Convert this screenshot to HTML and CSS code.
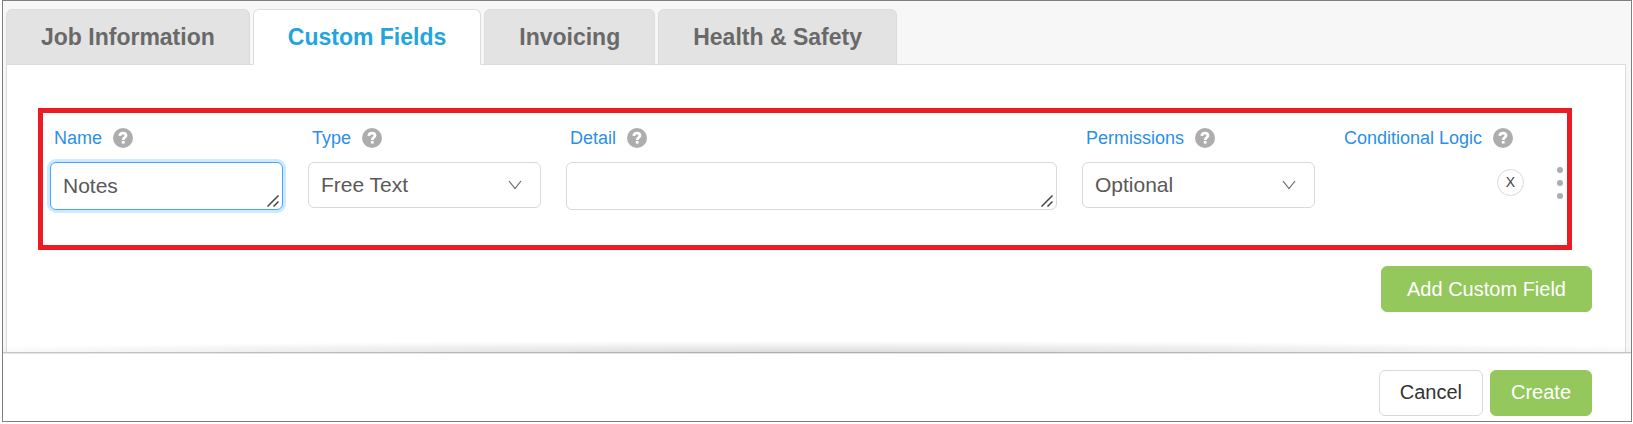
FILE: index.html
```
<!DOCTYPE html>
<html lang="en">
<head>
    <meta charset="UTF-8">
    <meta name="viewport" content="width=device-width, initial-scale=1.0">
    <title>Custom Fields</title>
    <link rel="stylesheet" href="styles.css">
</head>
<body>
    <svg class="sprite" aria-hidden="true">
        <symbol id="icon-help" viewBox="0 0 20 20">
            <circle cx="10" cy="10" r="10" fill="#adadad"/>
            <path d="M6.800 7.800C7 5.900 8.300 5.200 10 5.200C11.900 5.200 13 6.200 13 7.600C13 9.500 10.200 9.600 10.200 11.900" fill="none" stroke="#fff" stroke-width="2.800"/>
            <rect x="8.800" y="13" width="2.800" height="2.600" fill="#fff"/>
        </symbol>
        <symbol id="icon-arrow" viewBox="0 0 14 10">
            <path d="M1 1L7 8.500L13 1" fill="none" stroke="#666" stroke-width="1.200"/>
        </symbol>
        <symbol id="icon-grip" viewBox="0 0 12 12">
            <path d="M0.500 11.500L11.500 0.500M6.500 11.500L11.500 6.500" fill="none" stroke="#444" stroke-width="1.500"/>
        </symbol>
    </svg>

    <div class="window">
        <div class="tabs" role="tablist">
            <button class="tab" role="tab">Job Information</button>
            <button class="tab active" role="tab" aria-selected="true">Custom Fields</button>
            <button class="tab" role="tab">Invoicing</button>
            <button class="tab" role="tab">Health &amp; Safety</button>
        </div>

        <main class="panel">
            <div class="field-row">
                <div class="field">
                    <div class="field-label">
                        <label for="name">Name</label>
                        <svg class="help"><use href="#icon-help"/></svg>
                    </div>
                    <div class="control">
                        <textarea id="name" class="focused" rows="1">Notes</textarea>
                        <svg class="grip"><use href="#icon-grip"/></svg>
                    </div>
                </div>
                <div class="field">
                    <div class="field-label">
                        <label for="type">Type</label>
                        <svg class="help"><use href="#icon-help"/></svg>
                    </div>
                    <div class="control">
                        <select id="type">
                            <option>Free Text</option>
                        </select>
                        <svg class="arrow"><use href="#icon-arrow"/></svg>
                    </div>
                </div>
                <div class="field wide">
                    <div class="field-label">
                        <label for="detail">Detail</label>
                        <svg class="help"><use href="#icon-help"/></svg>
                    </div>
                    <div class="control">
                        <textarea id="detail" rows="1"></textarea>
                        <svg class="grip"><use href="#icon-grip"/></svg>
                    </div>
                </div>
                <div class="field">
                    <div class="field-label">
                        <label for="permissions">Permissions</label>
                        <svg class="help"><use href="#icon-help"/></svg>
                    </div>
                    <div class="control">
                        <select id="permissions">
                            <option>Optional</option>
                        </select>
                        <svg class="arrow"><use href="#icon-arrow"/></svg>
                    </div>
                </div>
                <div class="field">
                    <div class="field-label">
                        <span>Conditional Logic</span>
                        <svg class="help"><use href="#icon-help"/></svg>
                    </div>
                    <div class="row-actions">
                        <button class="remove" aria-label="Remove field">X</button>
                        <div class="drag">
                            <span></span>
                            <span></span>
                            <span></span>
                        </div>
                    </div>
                </div>
            </div>

            <div class="add-row">
                <button class="btn btn-green btn-wide">Add Custom Field</button>
            </div>
        </main>

        <footer class="footer">
            <button class="btn btn-plain">Cancel</button>
            <button class="btn btn-green">Create</button>
        </footer>
    </div>
</body>
</html>
```
FILE: styles.css
```
* {
    box-sizing: border-box;
}

body {
    margin: 0;
    padding: 0 1px 2px 2px;
    font-family: "Liberation Sans", Arial, sans-serif;
    background-color: #fff;
}

button, select, textarea {
    font-family: inherit;
    margin: 0;
}

button {
    cursor: pointer;
}

.sprite {
    display: none;
}

.window {
    border: 1px solid #7f7f7f;
    background-color: #f7f7f7;
}

.tabs {
    display: flex;
    gap: 3px;
    padding: 8px 3px 0;
}

.tab {
    height: 56px;
    margin-bottom: -1px;
    padding: 0 34px;
    border: 1px solid #dcdcdc;
    border-radius: 6px 6px 0 0;
    background-color: #e3e3e3;
    color: #696969;
    font-size: 23px;
    font-weight: bold;
}

.tab.active {
    position: relative;
    background-color: #fff;
    border-bottom-color: #fff;
    color: #22a4de;
}

.panel {
    margin: 0 5px 0 3px;
    padding: 43px 33px 40px 31px;
    border: 1px solid #dcdcdc;
    border-bottom: none;
    background-color: #fff;
}

.field-row {
    display: grid;
    grid-template-columns: repeat(5, 39fr) 38fr;
    column-gap: 25px;
    margin-right: 20px;
    padding: 14px 0 35px 7px;
    border: 5px solid #ed1c24;
}

.wide {
    grid-column: span 2;
}

.field-label {
    display: flex;
    align-items: center;
    gap: 11px;
    height: 22px;
    margin-bottom: 13px;
    padding-left: 4px;
    color: #2b8fe8;
    font-size: 18px;
    white-space: nowrap;
}

.help {
    width: 20px;
    height: 20px;
    flex: none;
}

.control {
    position: relative;
}

select, textarea {
    display: block;
    width: 100%;
    border: 1px solid #d9d9d9;
    border-radius: 6px;
    background-color: #fff;
    color: #595959;
    font-size: 21px;
    outline: none;
}

select {
    height: 46px;
    padding: 0 12px 2px;
    appearance: none;
}

textarea {
    height: 48px;
    padding: 11px 12px;
    line-height: 24px;
    resize: none;
    overflow: hidden;
}

textarea.focused {
    border-color: #40a9ff;
    box-shadow: 0 0 0 3px #d1e9fd;
}

.arrow {
    position: absolute;
    top: 18px;
    right: 19px;
    width: 14px;
    height: 10px;
    pointer-events: none;
}

.grip {
    position: absolute;
    right: 4px;
    bottom: 3px;
    width: 12px;
    height: 12px;
    pointer-events: none;
}

.row-actions {
    display: flex;
    justify-content: flex-end;
    align-items: center;
    gap: 33px;
    height: 42px;
    padding-right: 4px;
}

.remove {
    width: 27px;
    height: 27px;
    margin-bottom: 2px;
    padding: 0;
    border: 1px solid #d9d9d9;
    border-radius: 50%;
    background-color: #fff;
    color: #444;
    font-size: 14px;
}

.drag {
    display: flex;
    flex-direction: column;
    gap: 7px;
    cursor: move;
}

.drag span {
    width: 6px;
    height: 6px;
    border-radius: 50%;
    background-color: #adadad;
}

.add-row {
    display: flex;
    justify-content: flex-end;
    margin-top: 16px;
}

.btn {
    height: 46px;
    padding: 0 20px 2px;
    border: 1px solid #d9d9d9;
    border-radius: 6px;
    font-size: 20px;
}

.btn-green {
    border-color: #94c85c;
    background-color: #94c85c;
    color: #fff;
}

.btn-wide {
    padding: 0 25px;
}

.btn-plain {
    background-color: #fff;
    color: #333;
}

.footer {
    position: relative;
    display: flex;
    justify-content: flex-end;
    gap: 7px;
    padding: 17px 39px 5px;
    border-top: 1px solid #cbcbcb;
    background-color: #fff;
    box-shadow: inset 0 1px #e6e6e6;
}

/* soft shadow above the footer, strongest in the middle */
.footer::before {
    content: "";
    position: absolute;
    left: 0;
    right: 0;
    bottom: 100%;
    height: 12px;
    background: radial-gradient(60% 100% at bottom, rgba(0, 0, 0, 0.15), rgba(0, 0, 0, 0));
}
```
